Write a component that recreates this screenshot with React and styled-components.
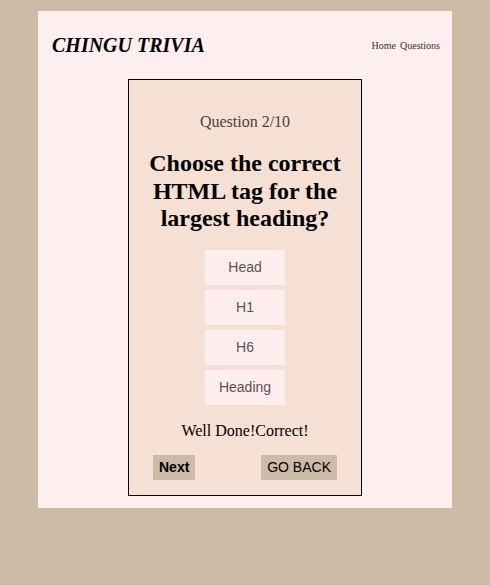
import React from "react";
import styled, { createGlobalStyle } from "styled-components";

const GlobalStyle = createGlobalStyle`
  html, body {
    margin: 0;
    padding: 0;
    background: #cdbba8;
    font-family: "Liberation Serif", "Times New Roman", serif;
  }
`;

const Page = styled.div`
  min-height: 585px;
  padding-top: 11px;
  box-sizing: border-box;
`;

const Panel = styled.div`
  width: 414px;
  margin: 0 auto;
  background: #fdefef;
  padding-bottom: 12px;
`;

const Header = styled.header`
  height: 68px;
  display: flex;
  align-items: center;
  justify-content: space-between;
  padding: 0 12px 0 14px;
`;

const Logo = styled.h1`
  margin: 0;
  font-size: 20px;
  font-weight: bold;
  font-style: italic;
  color: #000;
`;

const Nav = styled.nav`
  display: flex;
  gap: 4px;
  font-size: 10px;
  color: #333;
`;

const Card = styled.div`
  width: 200px;
  margin: 0 auto;
  border: 1px solid #000;
  background: #f5e0d3;
  padding: 33px 16px 15px;
  display: flex;
  flex-direction: column;
  align-items: center;
`;

const Counter = styled.div`
  font-size: 16px;
  line-height: 18px;
  color: #444;
`;

const Question = styled.h2`
  margin: 19px 0 17px;
  font-size: 24px;
  line-height: 27.6px;
  font-weight: bold;
  text-align: center;
  color: #000;
`;

const Answers = styled.div`
  display: flex;
  flex-direction: column;
  gap: 5px;
`;

const Answer = styled.button`
  width: 80px;
  height: 35px;
  border: none;
  background: #fdeeed;
  font-family: "Liberation Sans", Arial, sans-serif;
  font-size: 14px;
  color: #555;
  padding: 0;
`;

const Feedback = styled.div`
  margin-top: 17px;
  font-size: 16px;
  line-height: 18px;
  color: #000;
`;

const Actions = styled.div`
  align-self: stretch;
  display: flex;
  justify-content: space-between;
  margin-top: 15px;
  padding: 0 8px;
`;

const ActionButton = styled.button`
  height: 25px;
  border: none;
  padding: 0 6px;
  background: #cdbba8;
  font-family: "Liberation Sans", Arial, sans-serif;
  font-size: 14px;
  font-weight: ${(props) => (props.$bold ? "bold" : "normal")};
  color: #000;
`;

const answers = ["Head", "H1", "H6", "Heading"];

export default function App() {
  return (
    <>
      <GlobalStyle />
      <Page>
        <Panel>
          <Header>
            <Logo>CHINGU TRIVIA</Logo>
            <Nav>
              <span>Home</span>
              <span>Questions</span>
            </Nav>
          </Header>
          <Card>
            <Counter>Question 2/10</Counter>
            <Question>Choose the correct HTML tag for the largest heading?</Question>
            <Answers>
              {answers.map((a) => (
                <Answer key={a}>{a}</Answer>
              ))}
            </Answers>
            <Feedback>Well Done!Correct!</Feedback>
            <Actions>
              <ActionButton $bold>Next</ActionButton>
              <ActionButton>GO BACK</ActionButton>
            </Actions>
          </Card>
        </Panel>
      </Page>
    </>
  );
}
